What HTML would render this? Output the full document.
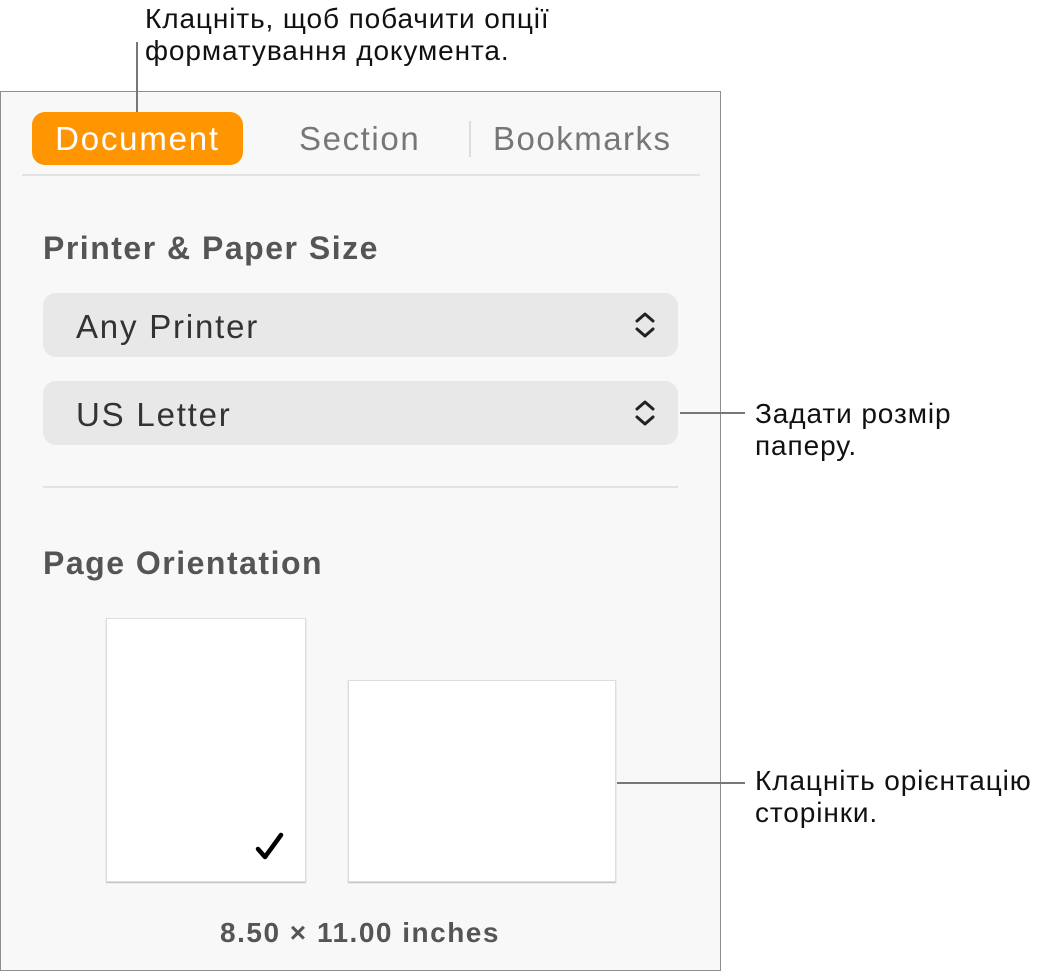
<!DOCTYPE html>
<html><head><meta charset="utf-8"><style>
body{margin:0;width:1041px;height:975px;background:#fff;position:relative;font-family:"Liberation Sans","DejaVu Sans",sans-serif;overflow:hidden}
.a{position:absolute}
.t{font-size:28px;letter-spacing:0.9px;color:#111;line-height:32px;white-space:nowrap}
.panel{left:0;top:91px;width:721px;height:880px;border:1.5px solid #8e8e8e;background:#f8f8f8;box-sizing:border-box}
.h{font-size:32px;letter-spacing:1.5px;font-weight:bold;color:#555;white-space:nowrap}
.pop{left:43px;width:635px;height:64px;background:#e8e8e8;border-radius:13px}
.pop span{position:absolute;left:33px;top:15px;font-size:33px;letter-spacing:1.8px;color:#333}
.pop svg{position:absolute;right:22px;top:18px}
.pg{background:#fff;border:1px solid #ddd;box-shadow:0 1px 1px rgba(0,0,0,.25);box-sizing:border-box}
.ln{background:#777}
.tab{font-size:33px;color:#777;letter-spacing:1.6px}
</style></head><body>
<div class="a t" style="left:145px;top:3px">Клацніть, щоб побачити опції<br>форматування документа.</div>
<div class="a panel"></div>
<div class="a ln" style="left:136px;top:42px;width:2px;height:70px"></div>
<div class="a" style="left:32px;top:112px;width:211px;height:53px;background:#ff9500;border-radius:13px"></div>
<div class="a tab" style="left:32px;top:120px;width:211px;text-align:center;color:#fff;letter-spacing:1.8px">Document</div>
<div class="a tab" style="left:299px;top:120px">Section</div>
<div class="a" style="left:469px;top:121px;width:1.5px;height:36px;background:#ddd"></div>
<div class="a tab" style="left:493px;top:120px;letter-spacing:1.5px">Bookmarks</div>
<div class="a" style="left:22px;top:174px;width:678px;height:2px;background:#e3e3e3"></div>
<div class="a h" style="left:43px;top:230px">Printer &amp; Paper Size</div>
<div class="a pop" style="top:293px"><span>Any Printer</span><svg width="22" height="28" viewBox="0 0 22 28"><path d="M3 10 L11 3 L19 10 M3 18 L11 25 L19 18" fill="none" stroke="#222" stroke-width="3" stroke-linecap="round" stroke-linejoin="round"/></svg></div>
<div class="a pop" style="top:381px"><span>US Letter</span><svg width="22" height="28" viewBox="0 0 22 28"><path d="M3 10 L11 3 L19 10 M3 18 L11 25 L19 18" fill="none" stroke="#222" stroke-width="3" stroke-linecap="round" stroke-linejoin="round"/></svg></div>
<div class="a ln" style="left:680px;top:412px;width:65px;height:2px"></div>
<div class="a t" style="left:755px;top:398px">Задати розмір<br>паперу.</div>
<div class="a" style="left:43px;top:486px;width:635px;height:2px;background:#e3e3e3"></div>
<div class="a h" style="left:43px;top:545px">Page Orientation</div>
<div class="a pg" style="left:106px;top:618px;width:200px;height:264px"></div>
<svg class="a" style="left:254px;top:830px" width="32" height="32" viewBox="0 0 32 32"><path d="M4 19 L11 27 L27 5" fill="none" stroke="#000" stroke-width="4.5" stroke-linecap="round" stroke-linejoin="round"/></svg>
<div class="a pg" style="left:348px;top:680px;width:268px;height:202px"></div>
<div class="a ln" style="left:617px;top:782px;width:128px;height:2px"></div>
<div class="a t" style="left:755px;top:765px">Клацніть орієнтацію<br>сторінки.</div>
<div class="a" style="left:0;top:917px;width:720px;text-align:center;font-size:28px;letter-spacing:1.5px;font-weight:bold;color:#555">8.50 × 11.00 inches</div>
</body></html>
